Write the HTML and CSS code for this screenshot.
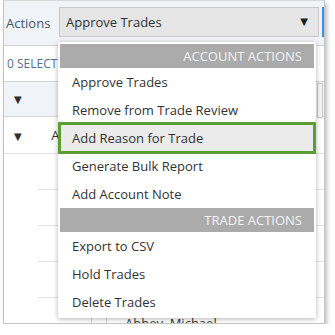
FILE: index.html
```html
<!DOCTYPE html>
<html lang="en">
<head>
    <meta charset="UTF-8">
    <title>Trade Review Actions</title>
    <link rel="stylesheet" href="styles.css">
</head>
<body>
    <div class="frame">
        <div class="toolbar">
            <label class="toolbar-label">Actions</label>
            <div class="select">
                <span>Approve Trades</span>
                <span class="caret">&#9660;</span>
            </div>
            <div class="side-btn"></div>
        </div>

        <div class="selected-row">0 SELECTED</div>

        <div class="grid-head">
            <span class="tri">&#9660;</span>
            <div class="scroll-stub"></div>
        </div>

        <div class="group-row">
            <span class="tri">&#9660;</span>
            <span class="group-name">Abbey Account</span>
        </div>
        <div class="row"></div>
        <div class="row"></div>
        <div class="row"></div>
        <div class="row"></div>
        <div class="row last">
            <span class="cell-bar"></span>
            <span class="cell-bar second"></span>
            <span class="row-text">Abbey, Michael</span>
        </div>

        <ul class="menu">
            <li class="menu-head">Account Actions</li>
            <li>Approve Trades</li>
            <li>Remove from Trade Review</li>
            <li class="active">Add Reason for Trade</li>
            <li>Generate Bulk Report</li>
            <li>Add Account Note</li>
            <li class="menu-head">Trade Actions</li>
            <li>Export to CSV</li>
            <li>Hold Trades</li>
            <li>Delete Trades</li>
        </ul>
    </div>
</body>
</html>
```

FILE: styles.css
```css
body {
    margin: 0;
    background: #ffffff;
    font-family: "Open Sans", Arial, sans-serif;
    color: #333333;
}

.frame {
    position: relative;
    margin-left: 3px;
    width: 320px;
    height: 322px;
    border: 1px solid #c4c4c4;
    border-top-color: #d8d8d8;
    background: #ffffff;
    box-shadow: 2px 3px 4px rgba(0, 0, 0, 0.25);
    overflow: hidden;
}

.toolbar {
    display: flex;
    align-items: center;
    height: 44px;
    background: #f0f3f7;
    border-bottom: 1px solid #cfd3d8;
}

.toolbar-label {
    width: 53px;
    padding-left: 2px;
    font-size: 13px;
    color: #40546b;
}

.select {
    display: flex;
    align-items: center;
    justify-content: space-between;
    box-sizing: border-box;
    width: 260px;
    height: 30px;
    margin-top: -3px;
    padding: 0 10px 0 6px;
    background: #e6e6e6;
    border: 1px solid #c8c8c8;
    font-size: 13px;
    color: #333333;
}

.caret {
    font-family: "DejaVu Sans", sans-serif;
    font-size: 10px;
    color: #1e1e1e;
}

.side-btn {
    width: 2px;
    height: 30px;
    margin-left: 3px;
    margin-top: -3px;
    background: #3f8fd8;
}

.selected-row {
    height: 35px;
    line-height: 36px;
    padding-left: 3px;
    font-size: 12px;
    color: #56708e;
    border-bottom: 1px solid #cfd3d8;
}

.grid-head {
    position: relative;
    height: 34px;
    background: #f0f3f7;
    border-bottom: 1px solid #d4d8dc;
}

.tri {
    display: inline-block;
    width: 29px;
    padding-left: 10px;
    font-family: "DejaVu Sans", sans-serif;
    font-size: 10px;
    color: #2e2e2e;
}

.grid-head .tri {
    line-height: 36px;
}

.scroll-stub {
    position: absolute;
    right: 1px;
    top: 1px;
    width: 4px;
    height: 33px;
    border: 1px solid #c8c8c8;
    background: #f4f4f4;
}

.group-row {
    height: 36px;
    line-height: 34px;
    border-bottom: 1px solid #e3e3e3;
}

.group-row .tri {
    width: 33px;
}

.group-name {
    font-size: 13px;
}

.row {
    height: 35px;
    margin-left: 34px;
    border-bottom: 1px solid #e3e3e3;
}

.row.last {
    display: flex;
    align-items: flex-end;
    border-bottom: none;
    height: 25px;
}

.cell-bar {
    width: 1px;
    height: 12px;
    margin-left: 53px;
    background: #d0d0d0;
}

.cell-bar.second {
    margin-left: 14px;
}

.row-text {
    margin-left: 18px;
    margin-bottom: -9px;
    font-size: 13px;
    line-height: 18px;
}

.menu {
    position: absolute;
    left: 54px;
    top: 41px;
    width: 254px;
    margin: 0;
    padding: 2px;
    list-style: none;
    background: #ffffff;
    box-shadow: 0 1px 5px rgba(0, 0, 0, 0.3);
    font-size: 13px;
}

.menu li {
    height: 28px;
    line-height: 28px;
    padding-left: 12px;
    color: #333333;
}

.menu .menu-head {
    height: 24px;
    line-height: 24px;
    padding-right: 12px;
    text-align: right;
    text-transform: uppercase;
    background: #ababab;
    color: #f4f4f4;
}

.menu .active {
    background: #ebebeb;
    outline: 3px solid #5c9e31;
    outline-offset: -1px;
}
```
